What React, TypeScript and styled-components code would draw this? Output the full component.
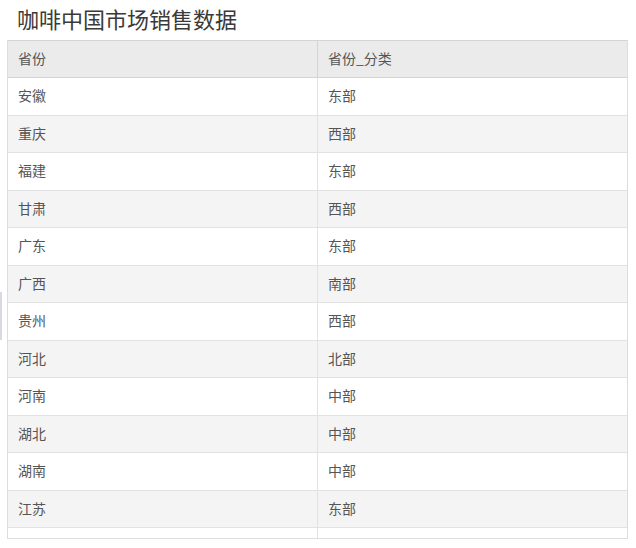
import React from "react";
import styled, { createGlobalStyle } from "styled-components";

const Global = createGlobalStyle`
  html, body { margin: 0; padding: 0; background: #fff; }
  body { font-family: "Noto Sans CJK SC", "Noto Sans", sans-serif; }
`;

const Page = styled.div`
  position: relative;
  width: 636px;
  height: 548px;
  overflow: hidden;
  padding: 0 8px 0 7px;
  box-sizing: border-box;
`;

const Title = styled.h1`
  margin: 0;
  padding: 3px 0 0 10px;
  height: 40px;
  box-sizing: border-box;
  font-size: 22px;
  line-height: 30px;
  font-weight: 400;
  color: #3a3a3a;
`;

const Table = styled.div`
  border: 1px solid #ddd;
  border-top: 1px solid #d4d4d4;
  width: 621px;
  box-sizing: border-box;
`;

const Row = styled.div<{ $bg: string }>`
  display: grid;
  grid-template-columns: 309px 1fr;
  height: 37.5px;
  box-sizing: border-box;
  background: ${(p) => p.$bg};
  border-bottom: 1px solid #e2e2e2;
`;

const HeadRow = styled(Row)`
  border-bottom: 1px solid #d4d4d4;
  height: 37px;
`;

const Cell = styled.div`
  display: flex;
  align-items: center;
  padding: 0 0 2px 10px;
  font-size: 14px;
  color: #555;
  & + & { border-left: 1px solid #e2e2e2; }
`;

const HeadCell = styled(Cell)`
  & + & { border-left: 1px solid #d4d4d4; }
`;

const Stub = styled.div`
  display: grid;
  grid-template-columns: 309px 1fr;
  height: 10px;
  & > div + div { border-left: 1px solid #e2e2e2; }
`;

const Handle = styled.div`
  position: absolute;
  left: 0;
  top: 292px;
  width: 2px;
  height: 48px;
  background: #d8dae2;
`;

const rows: [string, string][] = [
  ["安徽", "东部"],
  ["重庆", "西部"],
  ["福建", "东部"],
  ["甘肃", "西部"],
  ["广东", "东部"],
  ["广西", "南部"],
  ["贵州", "西部"],
  ["河北", "北部"],
  ["河南", "中部"],
  ["湖北", "中部"],
  ["湖南", "中部"],
  ["江苏", "东部"],
];

export default function App() {
  return (
    <Page>
      <Global />
      <Title>咖啡中国市场销售数据</Title>
      <Table>
        <HeadRow $bg="#ebebeb">
          <HeadCell>省份</HeadCell>
          <HeadCell>省份_分类</HeadCell>
        </HeadRow>
        {rows.map(([a, b], i) => (
          <Row key={a} $bg={i % 2 === 0 ? "#fff" : "#f4f4f4"}>
            <Cell>{a}</Cell>
            <Cell>{b}</Cell>
          </Row>
        ))}
        <Stub>
          <div />
          <div />
        </Stub>
      </Table>
      <Handle />
    </Page>
  );
}
